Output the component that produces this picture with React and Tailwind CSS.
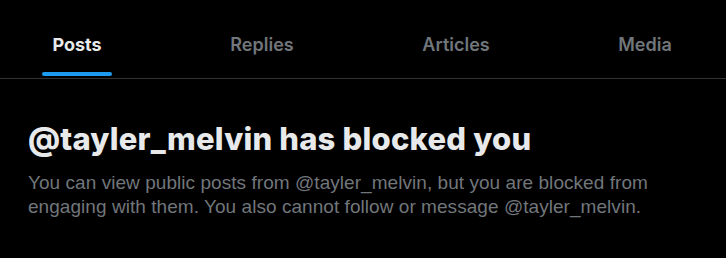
import React from "react";

const tabs = [
  { label: "Posts", width: "w-[154px]", active: true },
  { label: "Replies", width: "w-[216px]" },
  { label: "Articles", width: "w-[172px]" },
  { label: "Media", width: "w-[206px]" },
];

const ProfileTabs = () => (
  <div
    className="flex h-[79px] border-b border-[#2f3336] overflow-hidden"
    style={{ fontFamily: "Inter, sans-serif" }}
  >
    {tabs.map((tab) => (
      <div
        key={tab.label}
        className={`${tab.width} shrink-0 flex justify-center`}
      >
        <div className="relative flex flex-col items-center">
          <span
            className={`pt-[33px] text-[18px] leading-[24px] ${
              tab.active ? "font-bold text-[#e7e9ea]" : "font-semibold text-[#71767b]"
            }`}
          >
            {tab.label}
          </span>
          {tab.active && (
            <div className="absolute top-[72px] h-[4px] w-[70px] rounded-full bg-[#1d9bf0]" />
          )}
        </div>
      </div>
    ))}
  </div>
);

export default function App() {
  return (
    <div
      className="w-[726px] h-[258px] bg-black overflow-hidden"
      style={{ fontFamily: '"Liberation Sans", Arial, sans-serif' }}
    >
      <ProfileTabs />
      <div className="pl-[28px] pt-[42px] w-[700px]">
        <h2
          className="text-[31px] leading-[36px] font-extrabold tracking-[0.2px] text-[#e7e9ea]"
          style={{ fontFamily: "Inter, sans-serif" }}
        >
          @tayler_melvin has blocked you
        </h2>
        <p className="mt-[14px] text-[19px] leading-[24px] tracking-[0.05px] text-[#71767b]">
          You can view public posts from @tayler_melvin, but you are blocked from
          engaging with them. You also cannot follow or message @tayler_melvin.
        </p>
      </div>
    </div>
  );
}
